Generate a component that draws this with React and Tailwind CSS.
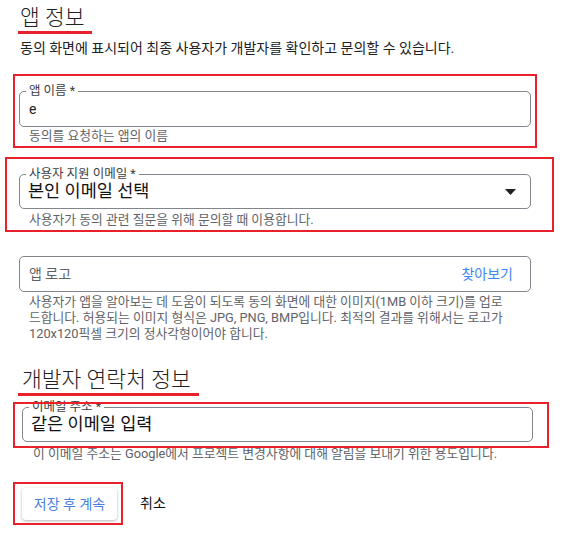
import { useState } from 'react';

const RED = "after:pointer-events-none after:absolute after:inset-0 after:border-2 after:border-[#e8212b] after:content-['']";

const OutlinedField = ({ label, value, big, trailing }) => (
  <div className="relative h-full rounded-[5px] border border-[#80868b] flex items-center px-[8px]">
    {label && (
      <span className="absolute -top-[9px] left-[6px] bg-white px-[3px] text-[12.5px] leading-[16px] text-[#3c4043]">
        {label}
      </span>
    )}
    <span className={big ? 'text-[17.5px] text-[#111]' : 'text-[14px] text-[#202124] pl-[1px]'}>{value}</span>
    {trailing}
  </div>
);

const Helper = ({ children, className = '' }) => (
  <p className={`text-[12.8px] leading-[16px] text-[#5f6368] whitespace-nowrap ${className}`}>{children}</p>
);

const SectionTitle = ({ children, lineWidth, indent }) => (
  <div>
    <h2 className={`${indent} text-[21.5px] leading-[24px] font-light text-[#202124]`}>{children}</h2>
    <div className={`ml-[18px] mt-[1px] h-[3px] bg-[#e8212b] ${lineWidth}`} />
  </div>
);

export default function App() {
  const [appName] = useState('e');

  return (
    <div className="w-[567px] h-[537px] bg-white overflow-hidden font-['Roboto','Noto_Sans_CJK_KR',sans-serif]">
      <div className="pt-[6px]">
        <SectionTitle lineWidth="w-[74px]" indent="pl-[20px]">앱 정보</SectionTitle>
      </div>

      <p className="mt-[5px] pl-[20px] text-[14px] leading-[18px] text-[#202124]">
        동의 화면에 표시되어 최종 사용자가 개발자를 확인하고 문의할 수 있습니다.
      </p>

      {/* 앱 이름 */}
      <div className={`relative mt-[17px] ml-[13px] w-[524px] h-[74px] pt-[17px] pl-[6px] ${RED}`}>
        <div className="w-[512px] h-[36px]">
          <OutlinedField label="앱 이름 *" value={appName} />
        </div>
        <Helper className="mt-[1px] pl-[10px]">동의를 요청하는 앱의 이름</Helper>
      </div>

      {/* 지원 이메일 */}
      <div className={`relative mt-[9px] ml-[5px] w-[549px] h-[75px] pt-[17px] pl-[14px] ${RED}`}>
        <div className="w-[512px] h-[35px]">
          <OutlinedField
            label="사용자 지원 이메일 *"
            value="본인 이메일 선택"
            big
            trailing={
              <svg className="ml-auto mr-[6px]" width="11" height="6" viewBox="0 0 11 6">
                <path d="M0 0h11L5.5 6z" fill="#202124" />
              </svg>
            }
          />
        </div>
        <Helper className="mt-[3px] pl-[10px]">사용자가 동의 관련 질문을 위해 문의할 때 이용합니다.</Helper>
      </div>

      {/* 앱 로고 */}
      <div className="mt-[24px] ml-[19px] w-[512px]">
        <div className="h-[36px] rounded-[5px] border border-[#80868b] flex items-center pl-[9px] pr-[17px]">
          <span className="text-[14px] text-[#5f6368]">앱 로고</span>
          <button className="ml-auto text-[14px] text-[#4285f4]">찾아보기</button>
        </div>
        <Helper className="mt-[2px] pl-[10px] text-[12.5px]">
          <span className="block">사용자가 앱을 알아보는 데 도움이 되도록 동의 화면에 대한 이미지(1MB 이하 크기)를 업로</span>
          <span className="block">드합니다. 허용되는 이미지 형식은 JPG, PNG, BMP입니다. 최적의 결과를 위해서는 로고가</span>
          <span className="block">120x120픽셀 크기의 정사각형이어야 합니다.</span>
        </Helper>
      </div>

      <div className="mt-[26px]">
        <SectionTitle lineWidth="w-[181px]" indent="pl-[22px]">개발자 연락처 정보</SectionTitle>
      </div>

      {/* 이메일 주소 */}
      <div className={`relative mt-[6px] ml-[13px] w-[536px] h-[46px] pt-[5px] pl-[9px] ${RED}`}>
        <div className="w-[511px] h-[35px]">
          <OutlinedField label="이메일 주소 *" value="같은 이메일 입력" big />
        </div>
      </div>
      <Helper className="-mt-[2px] pl-[33px]">
        이 이메일 주소는 Google에서 프로젝트 변경사항에 대해 알림을 보내기 위한 용도입니다.
      </Helper>

      <div className="mt-[20px] flex items-center">
        <div className={`relative ml-[13px] w-[110px] h-[43px] pt-[6px] pl-[9px] ${RED}`}>
          <button className="w-[95px] h-[32px] rounded-[4px] bg-white text-[14px] text-[#4a7fe0] shadow-[0_1px_3px_rgba(0,0,0,0.3)]">
            저장 후 계속
          </button>
        </div>
        <button className="ml-[17px] text-[14px] text-[#111]">취소</button>
      </div>
    </div>
  );
}
